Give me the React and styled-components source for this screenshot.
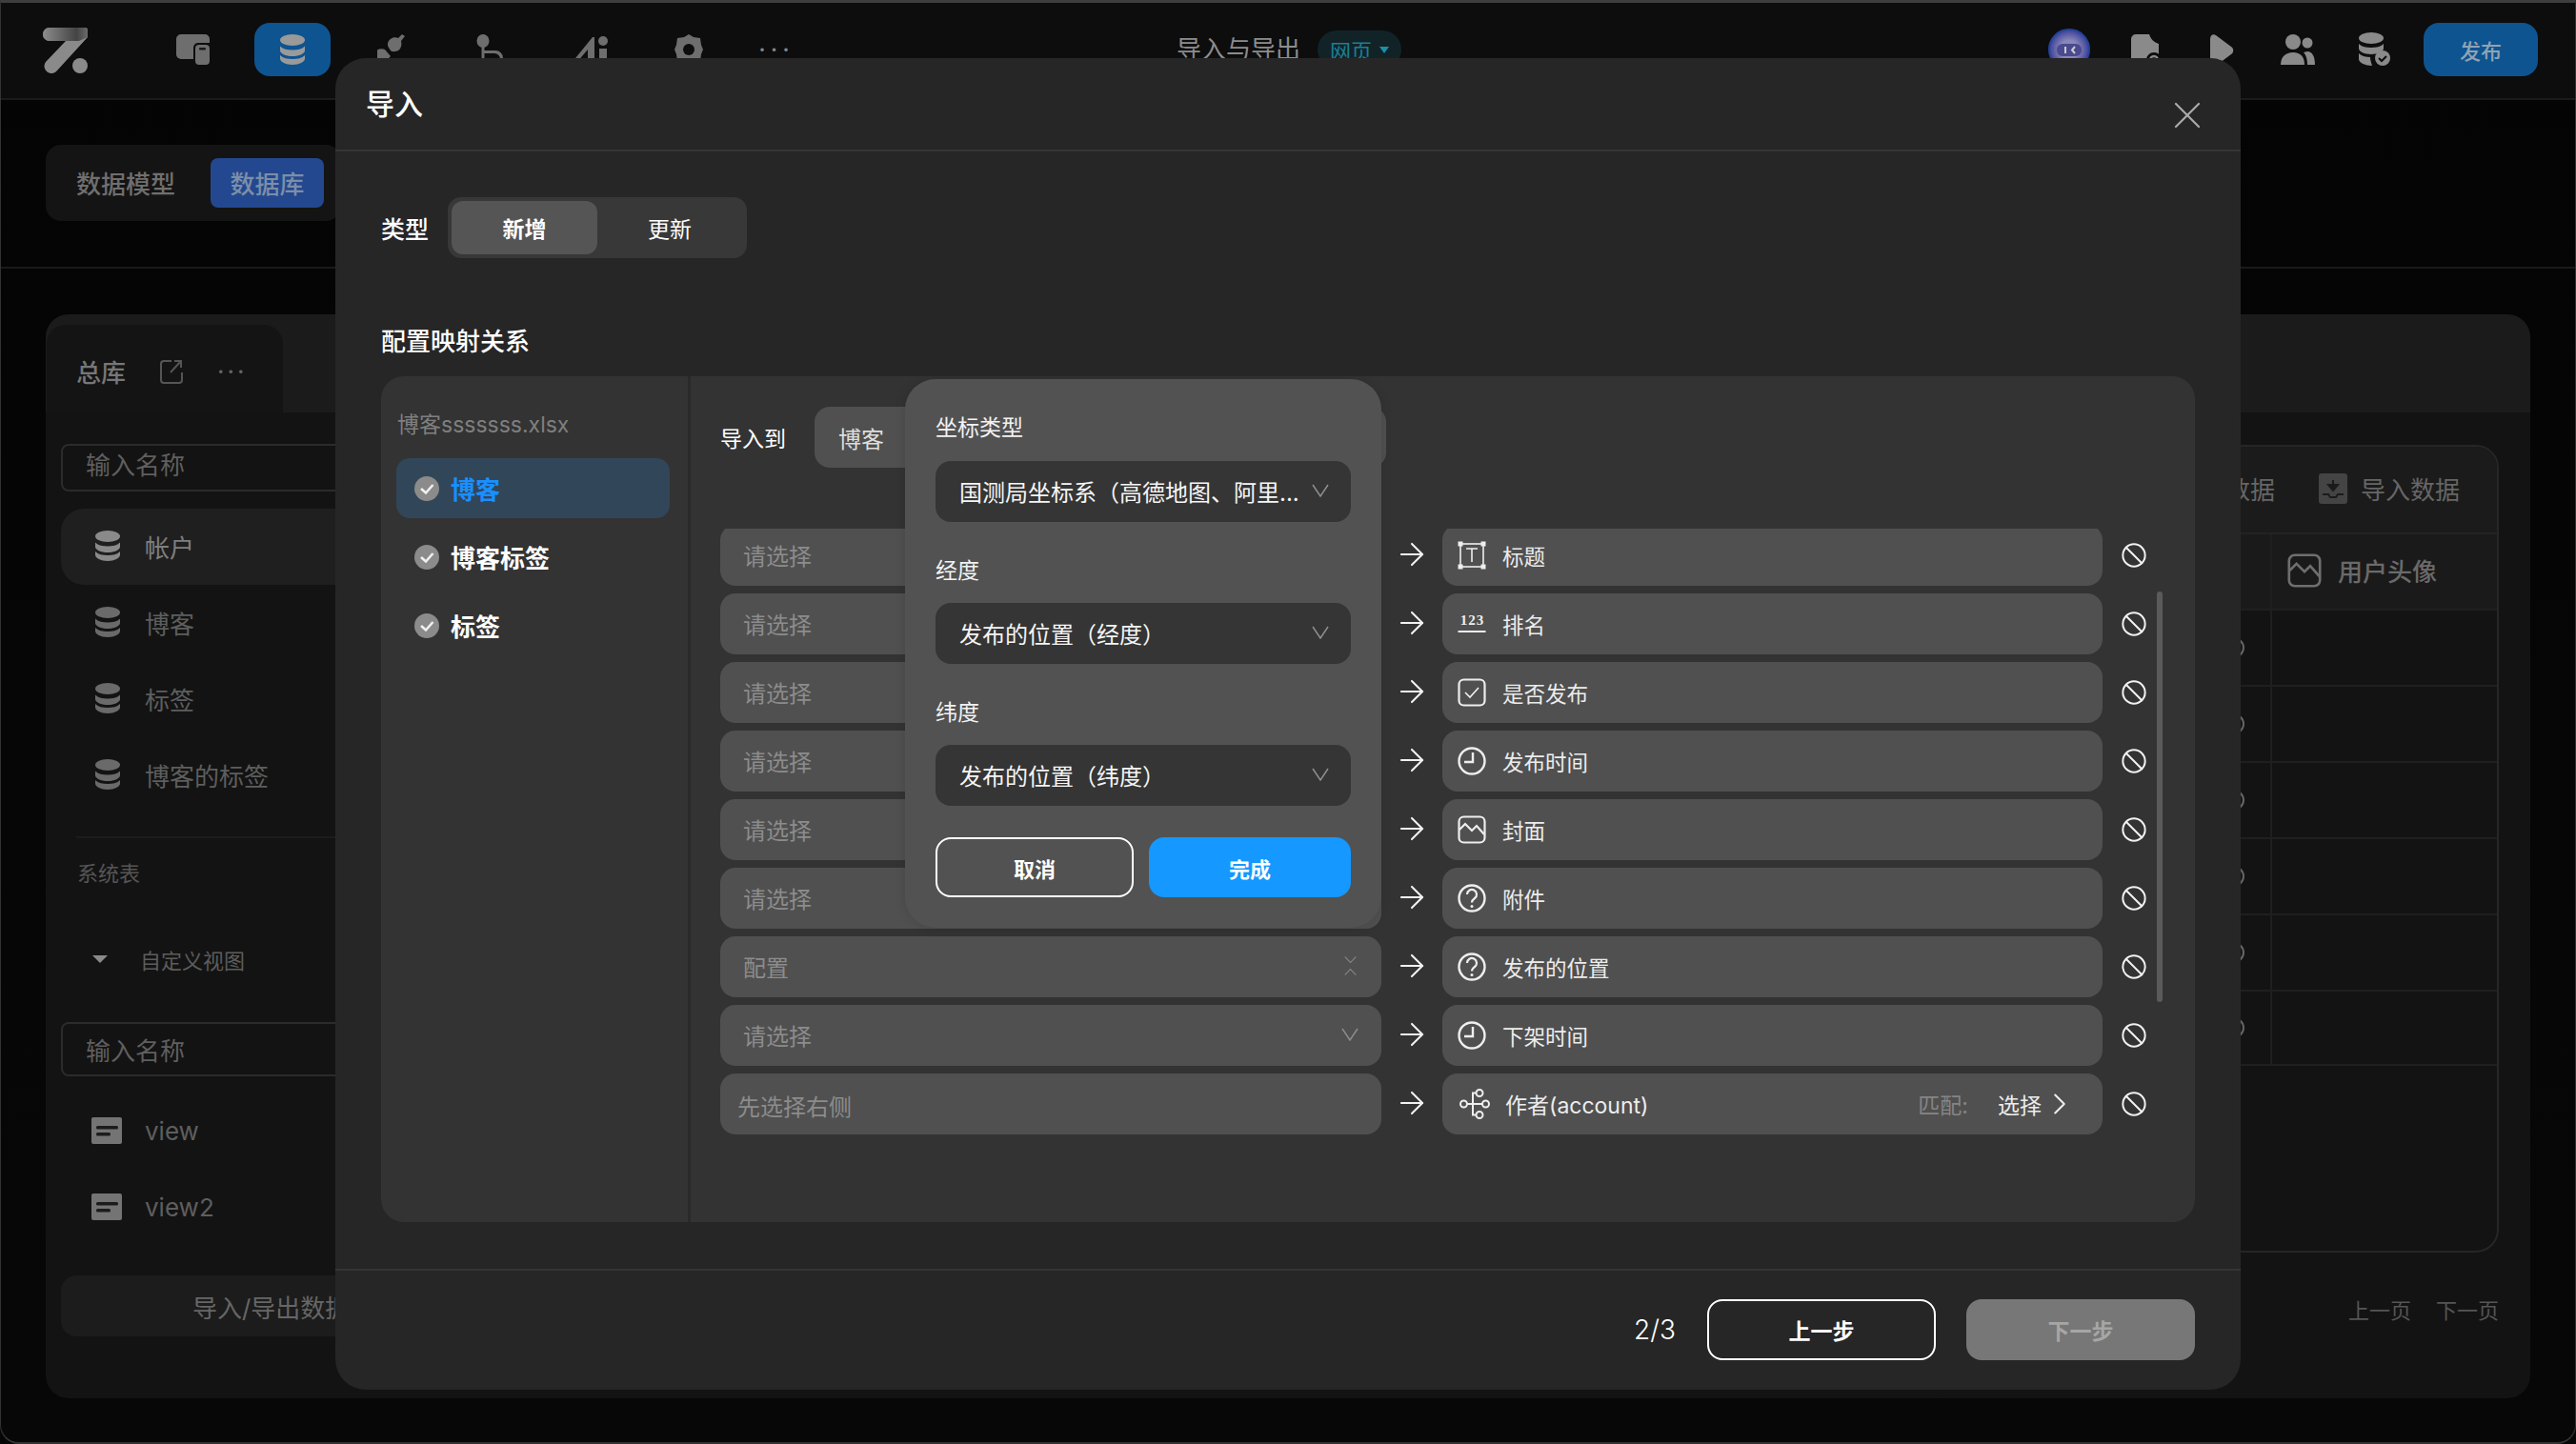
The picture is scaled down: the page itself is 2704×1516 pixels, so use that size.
import React from "react";
import styled, { createGlobalStyle } from "styled-components";
import { ArrowRight, Ban, ChevronRight, X } from "lucide-react";

const FONT = `Inter, "Noto Sans CJK SC", sans-serif`;

const GlobalStyle = createGlobalStyle`
  html, body {
    margin: 0;
    padding: 0;
    background: #060606;
  }
  body {
    font-family: ${FONT};
    -webkit-font-smoothing: antialiased;
  }
  * {
    box-sizing: border-box;
  }
`;

/* ---------- drawn icons ---------- */

const Logo = () => (
  <svg width="47" height="48" viewBox="0 0 47 48">
    <defs>
      <linearGradient id="logoBar" x1="0" x2="1" y1="0" y2="0">
        <stop offset="0" stopColor="#8c8c8c" />
        <stop offset="0.75" stopColor="#444" />
        <stop offset="1" stopColor="#6a6a6a" />
      </linearGradient>
    </defs>
    <path d="M7 0H44a3 3 0 0 1 3 3V10L15 45a7 7 0 0 1-12-9L24 14H7a7 7 0 0 1 0-14z" fill="#8a8a8a" />
    <path d="M7 0H44a3 3 0 0 1 3 3V10L38 14H7a7 7 0 0 1 0-14z" fill="url(#logoBar)" />
    <circle cx="39" cy="40" r="8" fill="#8a8a8a" />
  </svg>
);

const PagesIcon = () => (
  <svg width="36" height="32" viewBox="0 0 36 32">
    <path d="M5 0H30a5 5 0 0 1 5 5V9H23a5 5 0 0 0-5 5V26H5a5 5 0 0 1-5-5V5a5 5 0 0 1 5-5z" fill="#6e6e6e" />
    <rect x="20" y="11" width="15" height="21" rx="4" fill="#6e6e6e" />
    <rect x="24" y="14" width="7" height="2.4" rx="1" fill="#1a1a1a" />
  </svg>
);

const DbIcon = ({ color = "#777", width = 26, height = 32 }) => (
  <svg width={width} height={height} viewBox="0 0 26 32" fill={color}>
    <ellipse cx="13" cy="6" rx="13" ry="6" />
    <path d="M0 12.5c3 3 8 4 13 4s10-1 13-4V17c0 3.3-5.8 6-13 6S0 20.300 0 17z" />
    <path d="M0 22c3 3 8 4 13 4s10-1 13-4v3.500C26 28.800 20.200 32 13 32S0 28.800 0 25.500z" />
  </svg>
);

const PlugIcon = () => (
  <svg width="30" height="40" viewBox="0 0 30 40" fill="#6e6e6e">
    <path d="M26 0l3 2-4 5c1 4 0 8-3 10-2 1-6 2-8 0l-2-3c-2-3-1-7 2-9 2-2 6-2 8-1z" />
    <path d="M8 16l6 7-5 5a7 7 0 0 1-8 2 7 7 0 0 1 7-14z" />
  </svg>
);

const FlowIcon = () => (
  <svg width="30" height="40" viewBox="0 0 30 40" fill="#6e6e6e">
    <ellipse cx="7" cy="7" rx="6.500" ry="7" />
    <rect x="5.500" y="12" width="3" height="20" />
    <path d="M7 17H20a8 8 0 0 1 8 8V30h-3V26a6 6 0 0 0-6-6H7z" />
    <ellipse cx="6" cy="34" rx="6" ry="6" />
    <ellipse cx="25" cy="34" rx="6" ry="6" />
  </svg>
);

const AiIcon = () => (
  <svg width="38" height="40" viewBox="0 0 38 40" fill="#6e6e6e">
    <path d="M22 3H24V36H17V16L5 30H0z" />
    <circle cx="33" cy="7" r="5" />
    <rect x="29" y="15" width="8" height="22" />
  </svg>
);

const GearIcon = () => (
  <svg width="30" height="40" viewBox="0 0 30 40">
    <path d="M15 0l5 3 7 1 1 7 2 5-2 5-1 7-7 1-5 3-5-3-7-1-1-7-2-5 2-5 1-7 7-1z" fill="#6e6e6e" />
    <circle cx="15" cy="16" r="6" fill="#0d0d0d" />
  </svg>
);

const Avatar = () => (
  <svg width="44" height="44" viewBox="0 0 44 44">
    <defs>
      <radialGradient id="avatarFill">
        <stop offset="0.45" stopColor="#8a88b8" />
        <stop offset="1" stopColor="#3a3f9a" />
      </radialGradient>
    </defs>
    <circle cx="22" cy="22" r="21" fill="url(#avatarFill)" stroke="#24459c" strokeWidth="2" />
    <rect x="9" y="16" width="26" height="13" rx="6" fill="#4a4a90" />
    <rect x="17" y="19" width="2" height="7" fill="#ccc" />
    <path d="M28 19l-3 3.500 3 3.500" stroke="#ccc" strokeWidth="2" fill="none" />
  </svg>
);

const DocIcon = () => (
  <svg width="30" height="40" viewBox="0 0 30 40">
    <path d="M5 0H19C21 6 24 8 29 10V40H0V5a5 5 0 0 1 5-5z" fill="#8a8a8a" />
    <circle cx="24" cy="27" r="8" fill="#0d0d0d" />
    <circle cx="24" cy="27" r="4" fill="none" stroke="#8a8a8a" strokeWidth="2.500" />
  </svg>
);

const PlayIcon = () => (
  <svg width="25" height="36" viewBox="0 0 25 36">
    <path d="M0 5c0-4 3-6 6-4l16 12c3 2 3 6 0 8L6 33c-3 2-6 0-6-4z" fill="#8a8a8a" />
  </svg>
);

const UsersIcon = () => (
  <svg width="36" height="32" viewBox="0 0 36 32" fill="#8a8a8a">
    <circle cx="13" cy="8" r="8" />
    <circle cx="28" cy="9" r="5.500" />
    <path d="M0 32c0-8 5-13 13-13s12 5 12 13z" />
    <path d="M28 18c5 0 8 5 8 14h-8c0-5-1-10-4-13z" />
  </svg>
);

const DbCheckIcon = () => (
  <svg width="34" height="36" viewBox="0 0 34 36" fill="#8a8a8a">
    <ellipse cx="14" cy="6" rx="13" ry="6" />
    <path d="M1 12c3 3 8 4 13 4s10-1 13-4v5c0 3-6 6-13 6S1 20 1 17z" />
    <path d="M1 22c3 3 8 4 12 4 0 3 1 6 2 9C8 35 1 32 1 28z" />
    <circle cx="26" cy="27" r="8" />
    <path d="M22 27l3 3 5-5" stroke="#0d0d0d" strokeWidth="2" fill="none" />
  </svg>
);

const ShareIcon = () => (
  <svg width="24" height="26" viewBox="0 0 24 26" fill="none" stroke="#555" strokeWidth="2">
    <path d="M12 2H4a3 3 0 0 0-3 3V22a3 3 0 0 0 3 3H20a3 3 0 0 0 3-3V14" />
    <path d="M11 14L22 2M15 2h7V9" />
  </svg>
);

const ViewIcon = () => (
  <svg width="32" height="28" viewBox="0 0 32 28">
    <rect width="32" height="28" rx="2" fill="#747474" />
    <rect x="5" y="9" width="23" height="3.500" rx="1.500" fill="#1c1c1c" />
    <rect x="5" y="16" width="15" height="3.500" rx="1.500" fill="#1c1c1c" />
  </svg>
);

const ImportIcon = () => (
  <svg width="30" height="32" viewBox="0 0 30 32">
    <rect width="30" height="32" rx="3" fill="#444" />
    <path d="M15 7v9M10 12h10l-5 6z" stroke="#1b1b1b" strokeWidth="2" fill="#1b1b1b" />
    <path d="M4 22h6l2 3h6l2-3h6" stroke="#1b1b1b" strokeWidth="2" fill="none" />
  </svg>
);

const ImageIcon = ({ size = 30, color = "#eee", width = 2.200 }) => (
  <svg width={size} height={size} viewBox="0 0 30 30" fill="none" stroke={color} strokeWidth={width}>
    <rect x="1.500" y="1.500" width="27" height="27" rx="5" />
    <path d="M2 15l6-6 7 7 5-5 8 9" />
  </svg>
);

const TitleIcon = () => (
  <svg width="30" height="30" viewBox="0 0 30 30" fill="none" stroke="#eee" strokeWidth="1.600">
    <rect x="3" y="3" width="24" height="24" />
    <g fill="#eee" stroke="none">
      <rect x="0.500" y="0.500" width="5" height="5" />
      <rect x="24.500" y="0.500" width="5" height="5" />
      <rect x="0.500" y="24.500" width="5" height="5" />
      <rect x="24.500" y="24.500" width="5" height="5" />
    </g>
    <path d="M9 8H21M15 8V22" />
  </svg>
);

const NumberIcon = () => (
  <svg width="30" height="30" viewBox="0 0 30 30">
    <text x="15.500" y="16" textAnchor="middle" letterSpacing="1" fontFamily="Liberation Serif, serif" fontSize="15" fontWeight="700" fill="#eee">
      123
    </text>
    <rect x="0.500" y="22" width="29" height="2" fill="#eee" />
  </svg>
);

const CheckboxIcon = () => (
  <svg width="30" height="30" viewBox="0 0 30 30" fill="none" stroke="#eee" strokeWidth="2.200">
    <rect x="1.500" y="1.500" width="27" height="27" rx="5" />
    <path d="M8 15l5 5 9-10" strokeWidth="1.600" />
  </svg>
);

const ClockIcon = () => (
  <svg width="30" height="30" viewBox="0 0 30 30" fill="none" stroke="#eee" strokeWidth="2.400">
    <circle cx="15" cy="15" r="13.500" />
    <path d="M16 6V16H7" />
  </svg>
);

const HelpIcon = () => (
  <svg width="30" height="30" viewBox="0 0 30 30" fill="none" stroke="#eee" strokeWidth="2.400">
    <circle cx="15" cy="15" r="13.500" />
    <path d="M10 11a5 5 0 1 1 8 4c-2 1.500-3 2.500-3 4.500" strokeWidth="2.200" />
    <circle cx="15" cy="23.500" r="1.500" fill="#eee" stroke="none" />
  </svg>
);

const RelationIcon = () => (
  <svg width="32" height="32" viewBox="0 0 32 32" fill="none" stroke="#eee" strokeWidth="2">
    <circle cx="4.500" cy="16" r="3.500" />
    <circle cx="21" cy="4.500" r="3.500" />
    <circle cx="27.500" cy="16" r="3.500" />
    <circle cx="21" cy="27.500" r="3.500" />
    <path d="M8 16H24M14 16V4.500H17.500M14 16V27.500H17.500" />
  </svg>
);

const CheckBadge = () => (
  <svg width="26" height="26" viewBox="0 0 26 26">
    <circle cx="13" cy="13" r="13" fill="#8b8b8b" />
    <path d="M7 13l5 4.500L19.500 9" stroke="#f0f0f0" strokeWidth="2.600" fill="none" />
  </svg>
);

const VChevron = ({ w = 18, h = 14, up }) => (
  <svg width={w} height={h} viewBox="0 0 18 14" fill="none" stroke="currentColor" strokeWidth="1.500" preserveAspectRatio="none">
    <path d={up ? "M1 13L9 1l8 12" : "M1 1l8 12 8-12"} />
  </svg>
);

/* ---------- background page ---------- */

const Page = styled.div`
  position: relative;
  width: 2704px;
  height: 1516px;
  overflow: hidden;
  background: linear-gradient(#040404, #070707);
  border-top: 3px solid #3e3e3e;
  border-left: 1px solid #333;
  border-right: 1px solid #333;
  border-bottom: 2px solid #333;
  border-radius: 0 0 20px 20px;
  font-family: ${FONT};
`;

const TopBar = styled.header`
  display: grid;
  grid-template-columns: 1fr auto 1fr;
  align-items: center;
  height: 102px;
  padding: 0 39px 2px 44px;
  background: #0d0d0d;
  border-bottom: 2px solid #1b1b1b;
`;

const NavGroup = styled.nav`
  display: flex;
  align-items: center;
  gap: ${(p) => p.$gap || 0}px;
  justify-content: ${(p) => (p.$end ? "flex-end" : "flex-start")};
`;

const LogoBox = styled.div`
  display: flex;
  margin-right: 71px;
  margin-top: 2px;
`;

const NavButton = styled.div`
  display: flex;
  align-items: ${(p) => (p.$top ? "flex-start" : "center")};
  justify-content: center;
  width: ${(p) => p.$w || 80}px;
  height: 56px;
  padding-top: ${(p) => (p.$top ? 12 : 0)}px;
  border-radius: 16px;
  background: ${(p) => (p.$active ? "#0e5490" : "transparent")};
`;

const Dots = styled.span`
  font-size: 26px;
  line-height: 1;
  letter-spacing: ${(p) => p.$space || 2}px;
  color: ${(p) => p.$color || "#888"};
`;

const TitleBox = styled.div`
  display: flex;
  align-items: center;
  margin-left: -3px;
`;

const PageTitle = styled.span`
  font-size: 26px;
  line-height: 40px;
  color: #8c8c8c;
`;

const KindPill = styled.div`
  display: flex;
  align-items: center;
  gap: 8px;
  height: 40px;
  margin-left: 18px;
  padding: 0 13px;
  border-radius: 20px;
  background: #122328;
  color: #1c7f95;
  font-size: 22px;
`;

const PillArrow = styled.i`
  width: 0;
  height: 0;
  border-left: 5px solid transparent;
  border-right: 5px solid transparent;
  border-top: 7px solid #1c8fa8;
`;

const PublishButton = styled.div`
  display: flex;
  align-items: center;
  justify-content: center;
  width: 120px;
  height: 56px;
  margin-left: 12px;
  border-radius: 16px;
  background: #0e5490;
  color: #8fa3b4;
  font-size: 22px;
  font-weight: 500;
`;

const SubBar = styled.div`
  display: flex;
  align-items: center;
  height: 177px;
  padding: 0 0 2px 47px;
  border-bottom: 2px solid #1a1a1a;
`;

const ModeTabs = styled.div`
  display: flex;
  align-items: center;
  gap: 37px;
  width: 310px;
  height: 80px;
  padding-left: 32px;
  border-radius: 16px;
  background: #141414;
`;

const ModeTab = styled.div`
  display: flex;
  align-items: center;
  justify-content: center;
  height: 52px;
  font-size: 26px;
  font-weight: 500;
  color: ${(p) => (p.$active ? "#7c8ea8" : "#6f6f6f")};
  ${(p) => p.$active && "width: 119px; border-radius: 8px; background: #23488f;"}
`;

const MainPanel = styled.main`
  display: flex;
  flex-direction: column;
  width: 2608px;
  height: 1138px;
  margin: 48px 0 0 47px;
  border-radius: 24px;
  background: #131313;
  overflow: hidden;
`;

const PanelHead = styled.div`
  display: flex;
  align-items: flex-end;
  flex: 0 0 103px;
  background: #1b1b1b;
`;

const LibTab = styled.div`
  display: flex;
  align-items: center;
  gap: 36px;
  width: 248px;
  height: 92px;
  margin-left: 1px;
  padding: 5px 0 0 31px;
  border-radius: 20px 20px 0 0;
  background: #141414;
`;

const LibName = styled.span`
  font-size: 26px;
  font-weight: 500;
  color: #777;
`;

const PanelBody = styled.div`
  display: flex;
  flex: 1;
  min-height: 0;
`;

const Sidebar = styled.aside`
  flex: 0 0 400px;
  padding: 33px 0 0 16px;
`;

const SearchBox = styled.div`
  display: flex;
  align-items: center;
  height: ${(p) => p.$h}px;
  padding: 0 0 ${(p) => p.$lift || 0}px 24px;
  border: 2px solid #2b2b2b;
  border-radius: 8px;
  font-size: 26px;
  color: #5f5f5f;
`;

const TableList = styled.div`
  display: flex;
  flex-direction: column;
  margin-top: 18px;
`;

const TableItem = styled.div`
  display: flex;
  align-items: center;
  height: 80px;
  padding: 0 0 2px ${(p) => p.$pad || 36}px;
  border-radius: 24px;
  gap: ${(p) => p.$gap || 26}px;
  font-size: 26px;
  color: ${(p) => (p.$active ? "#7f7f7f" : "#5e5e5e")};
  background: ${(p) => (p.$active ? "#1f1f1f" : "transparent")};
`;

const SideRule = styled.div`
  height: 2px;
  margin: 24px 0 0 16px;
  background: #1c1c1c;
`;

const SideLabel = styled.div`
  margin: 22px 0 0 17px;
  font-size: 22px;
  line-height: 30px;
  color: #555;
`;

const GroupToggle = styled.div`
  display: flex;
  align-items: center;
  gap: 34px;
  height: 40px;
  margin: 55px 0 46px 33px;
  font-size: 22px;
  color: #5c5c5c;
`;

const ToggleArrow = styled.i`
  width: 0;
  height: 0;
  margin-top: 0;
  border-left: 8px solid transparent;
  border-right: 8px solid transparent;
  border-top: 8px solid #8a8a8a;
`;

const ActionButton = styled.div`
  display: flex;
  align-items: center;
  height: 64px;
  margin-top: 31px;
  padding-left: 138px;
  border-radius: 16px;
  background: #1c1c1c;
  font-size: 26px;
  white-space: nowrap;
  color: #666;
`;

const Content = styled.section`
  display: flex;
  flex-direction: column;
  flex: 1;
  padding: 34px 33px 0 50px;
`;

const DataCard = styled.div`
  display: flex;
  flex-direction: column;
  height: 848px;
  border: 2px solid #262626;
  border-radius: 24px;
`;

const CardBar = styled.div`
  display: flex;
  align-items: center;
  justify-content: flex-end;
  gap: 46px;
  flex: 0 0 90px;
  padding: 0 39px 3px 0;
  background: #1b1b1b;
  border-radius: 22px 22px 0 0;
  font-size: 26px;
  color: #666;
`;

const BarAction = styled.span`
  display: flex;
  align-items: center;
  gap: 14px;
`;

const GridRow = styled.div`
  display: grid;
  grid-template-columns: 1fr 236px;
  height: 80px;
  border-top: 2px solid ${(p) => (p.$head ? "#232323" : "#1f1f1f")};
  background: ${(p) => (p.$head ? "#1a1a1a" : "transparent")};
  border-bottom: ${(p) => (p.$last ? "2px solid #1f1f1f" : "none")};
`;

const GridCell = styled.div`
  display: flex;
  align-items: center;
  justify-content: ${(p) => (p.$first ? "flex-end" : "flex-start")};
  gap: 17px;
  padding: ${(p) => (p.$first ? "0 27px 0 0" : "0 0 3px 16px")};
  border-right: ${(p) => (p.$first ? "2px solid #1f1f1f" : "none")};
  font-size: 26px;
  font-weight: 500;
  color: #6a6a6a;
`;

const RowRing = styled.i`
  width: 22px;
  height: 22px;
  border: 2px solid #666;
  border-radius: 50%;
`;

const Pager = styled.div`
  display: flex;
  justify-content: flex-end;
  gap: 26px;
  margin-top: 48px;
  font-size: 22px;
  line-height: 26px;
  color: #555;
`;

/* ---------- modal ---------- */

const Modal = styled.div`
  position: absolute;
  left: 351px;
  top: 58px;
  display: flex;
  flex-direction: column;
  width: 2000px;
  height: 1398px;
  border-radius: 32px;
  background: #262626;
  color: #fff;
`;

const ModalHead = styled.div`
  display: flex;
  align-items: flex-start;
  justify-content: space-between;
  flex: 0 0 98px;
  padding: 31px 32px 0 32px;
  border-bottom: 2px solid #353535;
`;

const ModalTitle = styled.h2`
  margin: 0;
  font-size: 30px;
  line-height: 34px;
  font-weight: 500;
`;

const CloseBtn = styled.div`
  display: flex;
  margin-top: 5px;
  color: #aaa;
`;

const ModalBody = styled.div`
  flex: 1;
  min-height: 0;
  padding: 48px 48px 0;
`;

const TypeRow = styled.div`
  display: flex;
  align-items: center;
  gap: 20px;
  font-size: 25px;
  font-weight: 500;
`;

const Segment = styled.div`
  display: flex;
  width: 314px;
  height: 64px;
  padding: 4px;
  border-radius: 14px;
  background: #383838;
`;

const SegmentItem = styled.div`
  display: flex;
  align-items: center;
  justify-content: center;
  width: ${(p) => (p.$active ? 153 : 152)}px;
  border-radius: 12px;
  font-size: 23px;
  font-weight: ${(p) => (p.$active ? 600 : 400)};
  background: ${(p) => (p.$active ? "#555" : "transparent")};
`;

const SectionTitle = styled.div`
  margin: 69px 0 18px;
  font-size: 26px;
  line-height: 37px;
  font-weight: 500;
`;

const MapPanel = styled.div`
  display: flex;
  height: 888px;
  border-radius: 24px;
  background: #333;
  overflow: hidden;
`;

const FileColumn = styled.div`
  flex: 0 0 325px;
  padding: 33px 19px 0 16px;
  border-right: 3px solid #2a2a2a;
`;

const FileName = styled.div`
  margin-left: 1px;
  font-size: 23px;
  line-height: 36px;
  color: #7f7f7f;
`;

const FileTables = styled.div`
  display: flex;
  flex-direction: column;
  gap: 9px;
  margin-top: 17px;
`;

const FileTable = styled.div`
  display: flex;
  align-items: center;
  gap: 12px;
  height: 63px;
  padding-left: 19px;
  border-radius: 14px;
  font-size: 26px;
  font-weight: 700;
  color: ${(p) => (p.$active ? "#1890ff" : "#fff")};
  background: ${(p) => (p.$active ? "#324659" : "transparent")};
`;

const MapColumn = styled.div`
  position: relative;
  flex: 1;
  padding: 32px 0 0 31px;
`;

const TargetRow = styled.div`
  display: flex;
  align-items: center;
  gap: 30px;
  font-size: 23px;
`;

const TargetSelect = styled.div`
  display: flex;
  align-items: center;
  width: 600px;
  height: 64px;
  padding-left: 25px;
  border-radius: 16px;
  background: #505050;
  color: #ddd;
  font-size: 24px;
`;

const RowScroller = styled.div`
  display: flex;
  flex-direction: column;
  gap: 8px;
  height: 636px;
  margin-top: 64px;
  overflow: hidden;
`;

const MapRow = styled.div`
  display: flex;
  align-items: center;
  flex: 0 0 64px;
  margin-top: ${(p) => (p.$first ? -4 : 0)}px;
`;

const SourceSelect = styled.div`
  display: flex;
  align-items: center;
  justify-content: space-between;
  flex: 0 0 694px;
  height: 64px;
  padding: ${(p) => (p.$hint ? "3px 0 0 18px" : "0 24px 2px 24px")};
  border-radius: 16px;
  background: #505050;
  color: #8c8c8c;
  font-size: 24px;
`;

const Caret = styled.div`
  display: flex;
  flex-direction: column;
  align-items: center;
  gap: 6px;
  width: 18px;
  color: #8c8c8c;
  svg {
    display: block;
  }
`;

const ArrowCell = styled.div`
  display: flex;
  justify-content: center;
  flex: 0 0 64px;
  margin-top: -2px;
  color: #f2f2f2;
`;

const TargetField = styled.div`
  display: flex;
  align-items: center;
  flex: 0 0 693px;
  height: 64px;
  padding: 0 ${(p) => (p.$link ? 26 : 0)}px 0 ${(p) => (p.$link ? 18 : 16)}px;
  border-radius: 16px;
  background: #505050;
  font-size: ${(p) => (p.$link ? 23 : 22.5)}px;
  color: #ececec;
`;

const FieldIcon = styled.span`
  display: flex;
  margin-right: ${(p) => (p.$link ? 16 : 17)}px;
`;

const FieldName = styled.span`
  flex: 1;
`;

const MatchHint = styled.span`
  margin-right: 31px;
  color: #858585;
`;

const BanCell = styled.div`
  display: flex;
  margin: -1px 0 0 19px;
  color: #f2f2f2;
`;

const ScrollThumb = styled.div`
  position: absolute;
  top: 226px;
  right: 34px;
  width: 6px;
  height: 431px;
  border-radius: 3px;
  background: #5a5a5a;
`;

const Popover = styled.div`
  position: absolute;
  top: 3px;
  left: 225px;
  display: flex;
  flex-direction: column;
  width: 500px;
  height: 576px;
  padding: 35px 32px 0;
  border-radius: 32px;
  background: #525252;
  box-shadow: 0 0 12px rgba(0, 0, 0, 0.12);
`;

const PopLabel = styled.div`
  margin: ${(p) => (p.$first ? 0 : 35)}px 0 ${(p) => (p.$first ? 19 : 18)}px;
  font-size: 23px;
  line-height: 32px;
  color: #f2f2f2;
`;

const PopSelect = styled.div`
  display: flex;
  align-items: center;
  justify-content: space-between;
  height: 64px;
  padding: 0 23px 2px 25px;
  border-radius: 16px;
  background: #353535;
  font-size: 24px;
  color: #f5f5f5;
  white-space: nowrap;
  svg {
    color: #8f8f8f;
  }
`;

const PopButtons = styled.div`
  display: flex;
  gap: 16px;
  margin-top: 33px;
`;

const PopButton = styled.div`
  display: flex;
  align-items: center;
  justify-content: center;
  flex: ${(p) => (p.$primary ? "0 0 212px" : "0 0 208px")};
  height: 63px;
  border-radius: 16px;
  font-size: 22px;
  font-weight: 700;
  background: ${(p) => (p.$primary ? "#1598ff" : "transparent")};
  border: ${(p) => (p.$primary ? "none" : "2px solid #fff")};
`;

const ModalFoot = styled.div`
  display: flex;
  align-items: center;
  justify-content: flex-end;
  flex: 0 0 127px;
  padding: 0 48px 2px 0;
  border-top: 2px solid #353535;
`;

const StepCount = styled.span`
  margin-right: 33px;
  font-size: 28px;
  font-weight: 300;
`;

const FootButton = styled.div`
  display: flex;
  align-items: center;
  justify-content: center;
  width: 240px;
  height: 64px;
  border-radius: 16px;
  font-size: 23px;
  font-weight: 600;
  margin-left: ${(p) => (p.$next ? 32 : 0)}px;
  color: ${(p) => (p.$next ? "#a6a6a6" : "#fff")};
  background: ${(p) => (p.$next ? "#777" : "transparent")};
  border: ${(p) => (p.$next ? "none" : "2px solid #fff")};
`;

/* ---------- data ---------- */

const TABLES = ["帐户", "博客", "标签", "博客的标签"];
const VIEWS = ["view", "view2"];
const FILE_TABLES = ["博客", "博客标签", "标签"];

const FIELDS = [
  { name: "标题", icon: <TitleIcon />, source: "请选择" },
  { name: "排名", icon: <NumberIcon />, source: "请选择" },
  { name: "是否发布", icon: <CheckboxIcon />, source: "请选择" },
  { name: "发布时间", icon: <ClockIcon />, source: "请选择" },
  { name: "封面", icon: <ImageIcon />, source: "请选择" },
  { name: "附件", icon: <HelpIcon />, source: "请选择" },
  { name: "发布的位置", icon: <HelpIcon />, source: "配置", caret: "both" },
  { name: "下架时间", icon: <ClockIcon />, source: "请选择", caret: "down" },
  { name: "作者(account)", icon: <RelationIcon />, source: "先选择右侧", link: true },
];

const POP_SELECTS = [
  { label: "坐标类型", value: "国测局坐标系（高德地图、阿里..." },
  { label: "经度", value: "发布的位置（经度）" },
  { label: "纬度", value: "发布的位置（纬度）" },
];

const SelectCaret = ({ kind }) => {
  if (kind === "both") {
    return (
      <Caret>
        <VChevron w={13} h={7} />
        <VChevron w={13} h={7} up />
      </Caret>
    );
  }
  if (kind === "down") {
    return (
      <Caret>
        <VChevron />
      </Caret>
    );
  }
  return null;
};

const ImportModal = () => (
  <Modal>
    <ModalHead>
      <ModalTitle>导入</ModalTitle>
      <CloseBtn>
        <X size={48} strokeWidth={1.1} />
      </CloseBtn>
    </ModalHead>
    <ModalBody>
      <TypeRow>
        类型
        <Segment>
          <SegmentItem $active>新增</SegmentItem>
          <SegmentItem>更新</SegmentItem>
        </Segment>
      </TypeRow>
      <SectionTitle>配置映射关系</SectionTitle>
      <MapPanel>
        <FileColumn>
          <FileName>博客sssssss.xlsx</FileName>
          <FileTables>
            {FILE_TABLES.map((name, i) => (
              <FileTable key={name} $active={i === 0}>
                <CheckBadge />
                {name}
              </FileTable>
            ))}
          </FileTables>
        </FileColumn>
        <MapColumn>
          <TargetRow>
            导入到
            <TargetSelect>博客</TargetSelect>
          </TargetRow>
          <RowScroller>
            {FIELDS.map((field, i) => (
              <MapRow key={field.name} $first={i === 0}>
                <SourceSelect $hint={field.link}>
                  {field.source}
                  <SelectCaret kind={field.caret} />
                </SourceSelect>
                <ArrowCell>
                  <ArrowRight size={38} strokeWidth={1.3} />
                </ArrowCell>
                <TargetField $link={field.link}>
                  <FieldIcon $link={field.link}>{field.icon}</FieldIcon>
                  <FieldName>{field.name}</FieldName>
                  {field.link && (
                    <>
                      <MatchHint>匹配:</MatchHint>
                      选择
                      <ChevronRight size={38} strokeWidth={1.3} />
                    </>
                  )}
                </TargetField>
                <BanCell>
                  <Ban size={28} strokeWidth={1.7} />
                </BanCell>
              </MapRow>
            ))}
          </RowScroller>
          <ScrollThumb />
          <Popover>
            {POP_SELECTS.map((item, i) => (
              <React.Fragment key={item.label}>
                <PopLabel $first={i === 0}>{item.label}</PopLabel>
                <PopSelect>
                  {item.value}
                  <VChevron />
                </PopSelect>
              </React.Fragment>
            ))}
            <PopButtons>
              <PopButton>取消</PopButton>
              <PopButton $primary>完成</PopButton>
            </PopButtons>
          </Popover>
        </MapColumn>
      </MapPanel>
    </ModalBody>
    <ModalFoot>
      <StepCount>2/3</StepCount>
      <FootButton>上一步</FootButton>
      <FootButton $next>下一步</FootButton>
    </ModalFoot>
  </Modal>
);

const App = () => (
  <Page>
    <GlobalStyle />
    <TopBar>
      <NavGroup>
        <LogoBox>
          <Logo />
        </LogoBox>
        <NavGroup $gap={24}>
          <NavButton>
            <PagesIcon />
          </NavButton>
          <NavButton $active>
            <DbIcon color="#9a9a9a" width={30} height={32} />
          </NavButton>
          <NavButton $top>
            <PlugIcon />
          </NavButton>
          <NavButton $top>
            <FlowIcon />
          </NavButton>
          <NavButton $top>
            <AiIcon />
          </NavButton>
          <NavButton $top>
            <GearIcon />
          </NavButton>
          <NavButton $w={56}>
            <Dots $space={5}>···</Dots>
          </NavButton>
        </NavGroup>
      </NavGroup>
      <TitleBox>
        <PageTitle>导入与导出</PageTitle>
        <KindPill>
          网页
          <PillArrow />
        </KindPill>
      </TitleBox>
      <NavGroup $end>
        <NavButton>
          <Avatar />
        </NavButton>
        <NavButton $top>
          <DocIcon />
        </NavButton>
        <NavButton $top>
          <PlayIcon />
        </NavButton>
        <NavButton>
          <UsersIcon />
        </NavButton>
        <NavButton>
          <DbCheckIcon />
        </NavButton>
        <PublishButton>发布</PublishButton>
      </NavGroup>
    </TopBar>
    <SubBar>
      <ModeTabs>
        <ModeTab>数据模型</ModeTab>
        <ModeTab $active>数据库</ModeTab>
      </ModeTabs>
    </SubBar>
    <MainPanel>
      <PanelHead>
        <LibTab>
          <LibName>总库</LibName>
          <ShareIcon />
          <Dots $color="#666" $space={3}>···</Dots>
        </LibTab>
      </PanelHead>
      <PanelBody>
        <Sidebar>
          <SearchBox $h={50} $lift={10}>输入名称</SearchBox>
          <TableList>
            {TABLES.map((name, i) => (
              <TableItem key={name} $active={i === 0}>
                <DbIcon color={i === 0 ? "#8a8a8a" : "#6a6a6a"} />
                {name}
              </TableItem>
            ))}
          </TableList>
          <SideRule />
          <SideLabel>系统表</SideLabel>
          <GroupToggle>
            <ToggleArrow />
            自定义视图
          </GroupToggle>
          <SearchBox $h={57}>输入名称</SearchBox>
          <TableList>
            {VIEWS.map((name) => (
              <TableItem key={name} $pad={32} $gap={24}>
                <ViewIcon />
                {name}
              </TableItem>
            ))}
          </TableList>
          <ActionButton>导入/导出数据</ActionButton>
        </Sidebar>
        <Content>
          <DataCard>
            <CardBar>
              <BarAction>导出数据</BarAction>
              <BarAction>
                <ImportIcon />
                导入数据
              </BarAction>
            </CardBar>
            <GridRow $head>
              <GridCell $first />
              <GridCell>
                <ImageIcon size={36} color="#6e6e6e" />
                用户头像
              </GridCell>
            </GridRow>
            {[0, 1, 2, 3, 4, 5].map((row) => (
              <GridRow key={row} $last={row === 5}>
                <GridCell $first>
                  <RowRing />
                </GridCell>
                <GridCell />
              </GridRow>
            ))}
          </DataCard>
          <Pager>
            <span>上一页</span>
            <span>下一页</span>
          </Pager>
        </Content>
      </PanelBody>
    </MainPanel>
    <ImportModal />
  </Page>
);

export default App;
